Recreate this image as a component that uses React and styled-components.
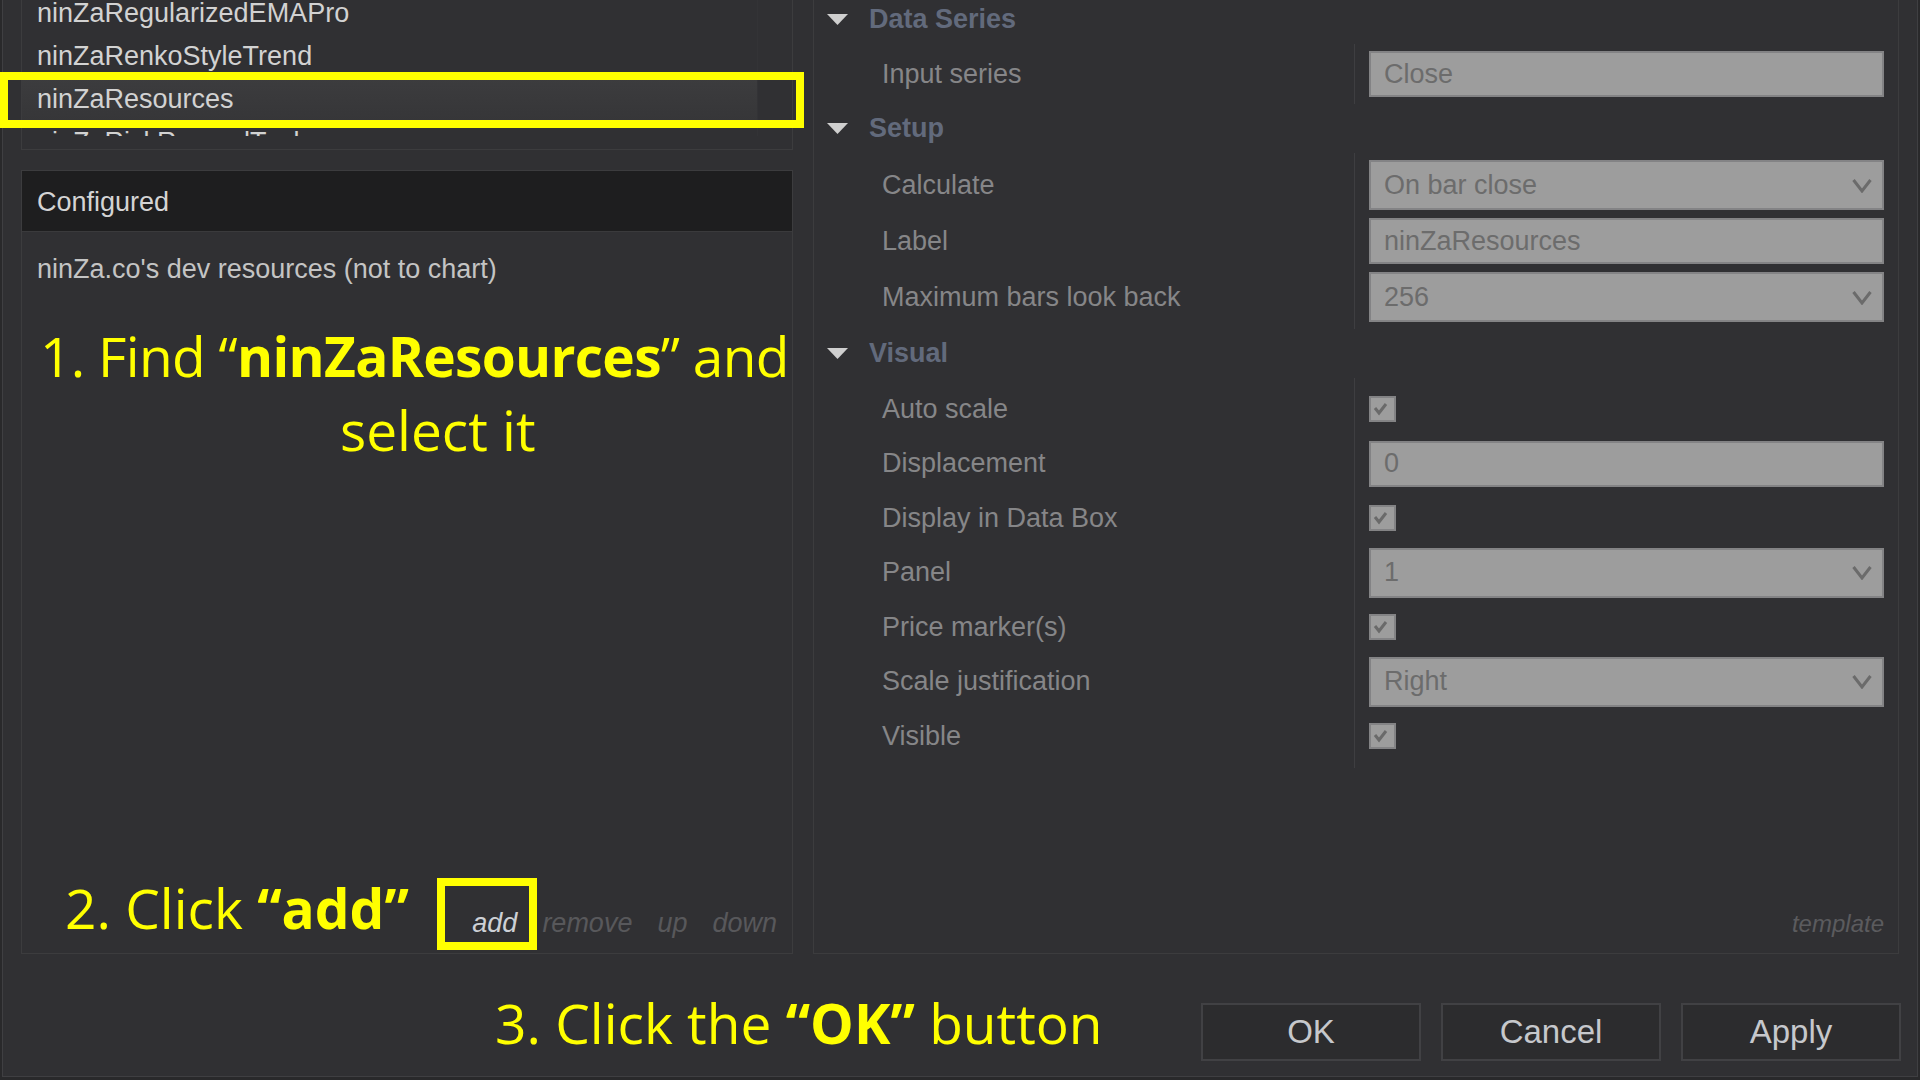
import React from 'react'
import styled, { createGlobalStyle } from 'styled-components'

const GlobalStyle = createGlobalStyle`
  html, body {
    margin: 0;
    padding: 0;
    background: #29292b;
    overflow: hidden;
  }
  body {
    font-family: 'Liberation Sans', Arial, sans-serif;
  }
`

const indicators = [
  'ninZaRegularizedEMAPro',
  'ninZaRenkoStyleTrend',
  'ninZaResources',
  'ninZaRiskRewardTool',
]

const sections = [
  {
    title: 'Data Series',
    rowHeight: 52,
    rows: [{ label: 'Input series', type: 'text', value: 'Close' }],
  },
  {
    title: 'Setup',
    rowHeight: 56,
    rows: [
      { label: 'Calculate', type: 'select', value: 'On bar close' },
      { label: 'Label', type: 'text', value: 'ninZaResources' },
      { label: 'Maximum bars look back', type: 'select', value: '256' },
    ],
  },
  {
    title: 'Visual',
    rowHeight: 54.5,
    rows: [
      { label: 'Auto scale', type: 'check' },
      { label: 'Displacement', type: 'text', value: '0' },
      { label: 'Display in Data Box', type: 'check' },
      { label: 'Panel', type: 'select', value: '1' },
      { label: 'Price marker(s)', type: 'check' },
      { label: 'Scale justification', type: 'select', value: 'Right' },
      { label: 'Visible', type: 'check' },
    ],
  },
]

const Triangle = () => (
  <svg width="21" height="11" viewBox="0 0 21 11">
    <polygon points="0,0 21,0 10.5,11" fill="#cfcfcf" />
  </svg>
)

const Chevron = () => (
  <svg width="20" height="15" viewBox="0 0 20 15">
    <polyline points="1.5,2 10,13 18.5,2" fill="none" stroke="#6b6b6b" strokeWidth="3" />
  </svg>
)

const Tick = () => (
  <svg width="23" height="22" viewBox="0 0 23 22">
    <polyline points="4,10 8,15 15,6" fill="none" stroke="#6a6a6a" strokeWidth="3" />
  </svg>
)

function Field({ row }) {
  if (row.type === 'check') {
    return (
      <CheckBox>
        <Tick />
      </CheckBox>
    )
  }
  return (
    <Input select={row.type === 'select'}>
      <span>{row.value}</span>
      {row.type === 'select' && <Chevron />}
    </Input>
  )
}

export default function App() {
  return (
    <Window>
      <GlobalStyle />
      <Dialog>
        <Body>
          <LeftColumn>
            <ListBox>
              <ListViewport>
                <List>
                  {indicators.map(name => (
                    <ListItem key={name} selected={name === 'ninZaResources'}>
                      {name}
                    </ListItem>
                  ))}
                </List>
                <ScrollTrack />
              </ListViewport>
            </ListBox>
            <ConfigBox>
              <ConfigHeader>Configured</ConfigHeader>
              <Description>ninZa.co's dev resources (not to chart)</Description>
              <Toolbar>
                <ToolLink active>add</ToolLink>
                <ToolLink>remove</ToolLink>
                <ToolLink>up</ToolLink>
                <ToolLink>down</ToolLink>
              </Toolbar>
            </ConfigBox>
          </LeftColumn>

          <PropertyPanel>
            {sections.map(section => (
              <React.Fragment key={section.title}>
                <SectionHeader>
                  <Triangle />
                  <span>{section.title}</span>
                </SectionHeader>
                <Group>
                  <Column>
                    {section.rows.map(row => (
                      <Label key={row.label} h={section.rowHeight}>
                        {row.label}
                      </Label>
                    ))}
                  </Column>
                  <Divider />
                  <Column grow>
                    {section.rows.map(row => (
                      <ValueCell key={row.label} h={section.rowHeight}>
                        <Field row={row} />
                      </ValueCell>
                    ))}
                  </Column>
                </Group>
              </React.Fragment>
            ))}
            <TemplateLink>template</TemplateLink>
          </PropertyPanel>
        </Body>

        <Footer>
          <Button>OK</Button>
          <Button>Cancel</Button>
          <Button>Apply</Button>
        </Footer>
      </Dialog>

      {/* tutorial callouts drawn over the dialog */}
      <Highlight style={{ left: 0, top: 72, width: 804, height: 56 }} />
      <Highlight style={{ left: 437, top: 878, width: 100, height: 72 }} />

      <Callout top={319} left={40}>
        <CalloutLine tight>
          1. Find “<b>ninZaResources</b>” and
        </CalloutLine>
        <CalloutLine indent={300}>select it</CalloutLine>
      </Callout>
      <Callout top={871} left={65}>
        2. Click <b>“add”</b>
      </Callout>
      <Callout top={986} left={495}>
        3. Click the <b>“OK”</b> button
      </Callout>
    </Window>
  )
}

const Window = styled.div`
  position: relative;
  width: 1920px;
  height: 1080px;
  overflow: hidden;
  box-sizing: border-box;
  padding: 0 2px 3px 2px;
`

const Dialog = styled.div`
  display: flex;
  flex-direction: column;
  box-sizing: border-box;
  height: calc(100% + 40px);
  margin-top: -40px;
  background: #303033;
  border: 1px solid #3f3f42;
  border-top: none;
`

const Body = styled.div`
  flex: 1;
  display: grid;
  grid-template-columns: 772px 1fr;
  column-gap: 20px;
  padding: 0 18px 0 18px;
  min-height: 0;
`

const LeftColumn = styled.div`
  display: flex;
  flex-direction: column;
  gap: 20px;
  min-height: 0;
`

const ListBox = styled.div`
  box-sizing: border-box;
  height: 190px;
  border: 1px solid #3c3c3e;
  border-top: none;
  padding-bottom: 13px;
`

const ListViewport = styled.div`
  display: flex;
  height: 176px;
  overflow: hidden;
`

const List = styled.div`
  flex: 1;
  padding-top: 32px;
`

const ListItem = styled.div`
  height: 43px;
  display: flex;
  align-items: center;
  padding-left: 15px;
  font-size: 27px;
  color: #d2d2d2;
  white-space: nowrap;
  background: ${p => (p.selected ? 'linear-gradient(#3c3c3e, #363638)' : 'transparent')};
`

const ScrollTrack = styled.div`
  width: 34px;
  border-left: 1px solid #333336;
`

const ConfigBox = styled.div`
  flex: 1;
  display: flex;
  flex-direction: column;
  border: 1px solid #3c3c3e;
`

const ConfigHeader = styled.div`
  height: 61px;
  display: flex;
  align-items: center;
  padding: 3px 0 0 15px;
  box-sizing: border-box;
  background: #1e1e1f;
  border-bottom: 1px solid #3a3a3c;
  font-size: 27px;
  color: #d4d4d4;
`

const Description = styled.div`
  padding: 21px 0 0 15px;
  font-size: 27px;
  line-height: 32px;
  color: #c4c4c4;
`

const Toolbar = styled.div`
  margin-top: auto;
  height: 40px;
  display: flex;
  align-items: center;
  justify-content: flex-end;
  gap: 25px;
  padding: 0 15px 10px 0;
`

const ToolLink = styled.span`
  font-size: 27px;
  font-style: italic;
  color: ${p => (p.active ? '#cdd0d6' : '#58585b')};
`

const PropertyPanel = styled.div`
  display: flex;
  flex-direction: column;
  border: 1px solid #3c3c3e;
  border-top: none;
  padding: 35px 14px 14px 13px;
  min-height: 0;
`

const SectionHeader = styled.div`
  height: 49px;
  display: flex;
  align-items: center;
  gap: 21px;
  font-size: 27px;
  font-weight: 700;
  color: #626a7c;
`

const Group = styled.div`
  display: flex;
`

const Column = styled.div`
  display: flex;
  flex-direction: column;
  padding: 4px 0;
  ${p => (p.grow ? 'flex: 1;' : 'width: 513px;')}
`

const Divider = styled.div`
  width: 1px;
  margin: 0 14px;
  background: #3e3e41;
`

const Label = styled.div`
  height: ${p => p.h}px;
  display: flex;
  align-items: center;
  padding-left: 55px;
  font-size: 27px;
  color: #868688;
  white-space: nowrap;
`

const ValueCell = styled.div`
  height: ${p => p.h}px;
  display: flex;
  align-items: center;
`

const Input = styled.div`
  flex: 1;
  box-sizing: border-box;
  height: ${p => (p.select ? 50 : 46)}px;
  display: flex;
  align-items: center;
  justify-content: space-between;
  padding: 0 10px 0 13px;
  background: #9d9d9d;
  border: 2px solid #838385;
  font-size: 27px;
  color: #6c6c6c;
`

const CheckBox = styled.div`
  box-sizing: border-box;
  width: 27px;
  height: 26px;
  display: flex;
  align-items: center;
  justify-content: center;
  background: #9d9d9d;
  border: 2px solid #838385;
`

const TemplateLink = styled.div`
  margin-top: auto;
  align-self: flex-end;
  font-size: 24px;
  line-height: 30px;
  font-style: italic;
  color: #5b5b5e;
`

const Footer = styled.div`
  display: flex;
  justify-content: flex-end;
  gap: 20px;
  padding: 49px 16px 15px 0;
`

const Button = styled.div`
  box-sizing: border-box;
  width: 220px;
  height: 58px;
  display: flex;
  align-items: center;
  justify-content: center;
  background: #2c2c2e;
  border: 2px solid #414144;
  font-size: 33px;
  color: #c6c8cc;
`

const Highlight = styled.div`
  position: absolute;
  box-sizing: border-box;
  border: 8px solid #ffff00;
`

const Callout = styled.div`
  position: absolute;
  top: ${p => p.top}px;
  left: ${p => p.left}px;
  font-family: 'Open Sans', 'Noto Sans', sans-serif;
  font-size: 55px;
  line-height: 74px;
  color: #ffff00;
  white-space: nowrap;

  b {
    font-weight: 700;
  }
`

const CalloutLine = styled.div`
  padding-left: ${p => p.indent || 0}px;
  letter-spacing: ${p => (p.tight ? '-0.7px' : 'normal')};
`
